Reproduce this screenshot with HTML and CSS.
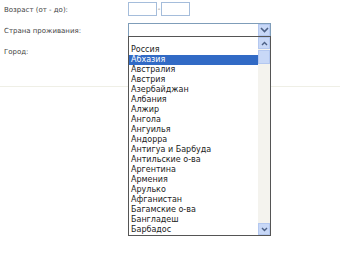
FILE: index.html
```html
<!DOCTYPE html>
<html lang="ru">
<head>
  <meta charset="UTF-8">
  <title>Анкета</title>
  <link rel="stylesheet" href="styles.css">
</head>
<body>
  <div class="form">
    <div class="row">
      <label class="caption">Возраст (от - до):</label>
      <div class="field">
        <input class="age" type="text"><span class="dash">-</span><input class="age" type="text">
      </div>
    </div>
    <div class="row">
      <label class="caption">Страна проживания:</label>
      <div class="field">
        <div class="combo">
          <div class="combo-text"></div>
          <div class="combo-btn"><svg width="9" height="6" viewBox="0 0 9 6"><path d="M1 1l3.5 3.5L8 1" fill="none" stroke="#4d6185" stroke-width="1.6"/></svg></div>
        </div>
      </div>
    </div>
    <div class="row">
      <label class="caption">Город:</label>
      <div class="field"></div>
    </div>
  </div>
  <div class="divider"></div>

  <div class="dropdown">
    <ul class="options">
      <li class="blank"></li>
      <li>Россия</li>
      <li class="selected">Абхазия</li>
      <li>Австралия</li>
      <li>Австрия</li>
      <li>Азербайджан</li>
      <li>Албания</li>
      <li>Алжир</li>
      <li>Ангола</li>
      <li>Ангуилья</li>
      <li>Андорра</li>
      <li>Антигуа и Барбуда</li>
      <li>Антильские о-ва</li>
      <li>Аргентина</li>
      <li>Армения</li>
      <li>Арулько</li>
      <li>Афганистан</li>
      <li>Багамские о-ва</li>
      <li>Бангладеш</li>
      <li>Барбадос</li>
    </ul>
    <div class="scrollbar">
      <div class="sb-btn"><svg width="7" height="5" viewBox="0 0 7 5"><path d="M1 4l2.5-2.5L6 4" fill="none" stroke="#4d6185" stroke-width="1.4"/></svg></div>
      <div class="sb-thumb"></div>
      <div class="sb-track"></div>
      <div class="sb-btn"><svg width="7" height="5" viewBox="0 0 7 5"><path d="M1 1l2.5 2.5L6 1" fill="none" stroke="#4d6185" stroke-width="1.4"/></svg></div>
    </div>
  </div>
</body>
</html>
```

FILE: styles.css
```css
body {
  margin: 0;
  background: #ffffff;
  font-family: "DejaVu Sans", Verdana, sans-serif;
  font-size: 7px;
  color: #444444;
  position: relative;
  height: 255px;
  overflow: hidden;
}

.form {
  padding: 2px 0 0 4px;
}

.row {
  display: flex;
  align-items: flex-start;
  height: 21px;
}

.caption {
  width: 124px;
  line-height: 14px;
  padding-top: 1px;
}

.field {
  display: flex;
  align-items: center;
}

.age {
  width: 29px;
  height: 14px;
  margin: 0;
  padding: 0;
  border: 1px solid #a5bddb;
  box-sizing: border-box;
}

.dash {
  width: 4px;
  text-align: center;
  color: #666666;
}

.combo {
  display: flex;
  width: 143px;
  height: 14px;
  border: 1px solid #7f9db9;
  box-sizing: border-box;
  background: #ffffff;
}

.combo-text {
  flex: 1;
}

.combo-btn {
  width: 12px;
  display: flex;
  align-items: center;
  justify-content: center;
  background: #c8d8f7;
  border: 1px solid #b4c8f0;
  box-sizing: border-box;
}

.divider {
  margin-top: 21px;
  border-top: 1px solid #efefe6;
}

.dropdown {
  position: absolute;
  left: 128px;
  top: 36px;
  width: 143px;
  height: 200px;
  border: 1px solid #555555;
  box-sizing: border-box;
  background: #ffffff;
  display: flex;
}

.options {
  flex: 1;
  list-style: none;
  margin: 0;
  padding: 0;
  color: #222222;
  font-size: 8px;
}

.options li {
  height: 10px;
  line-height: 10px;
  padding-left: 2px;
  white-space: nowrap;
}

.options li.blank {
  height: 8px;
}

.options li.selected {
  background: #316ac5;
  color: #ffffff;
}

.scrollbar {
  width: 12px;
  display: flex;
  flex-direction: column;
  background: #f4f3ee;
}

.sb-btn {
  height: 12px;
  display: flex;
  align-items: center;
  justify-content: center;
  background: #c8d8f7;
  border: 1px solid #b4c8f0;
  box-sizing: border-box;
}

.sb-thumb {
  height: 14px;
  margin-top: 1px;
  background: #c8d8f7;
  border: 1px solid #b4c8f0;
  box-sizing: border-box;
}

.sb-track {
  flex: 1;
}
```
